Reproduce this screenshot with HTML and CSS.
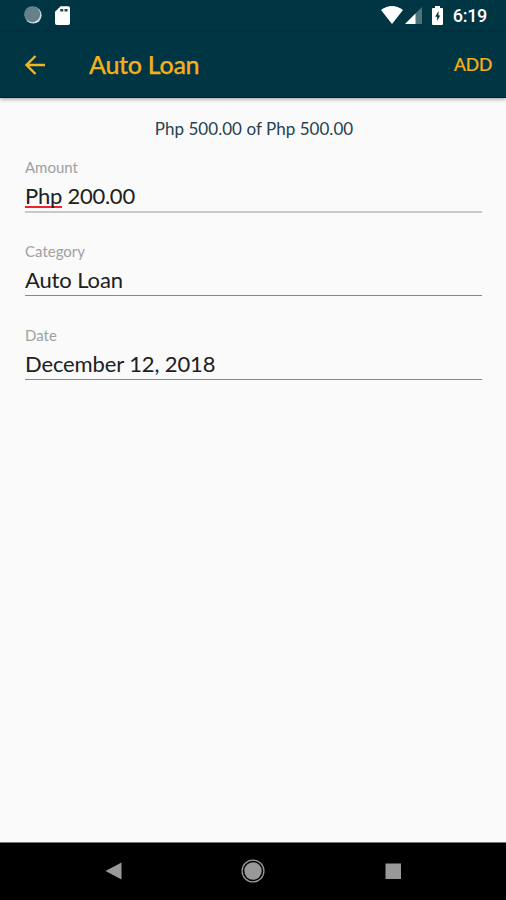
FILE: index.html
```html
<!DOCTYPE html>
<html lang="en">
<head>
<meta charset="utf-8">
<title>Auto Loan</title>
<link rel="stylesheet" href="styles.css">
</head>
<body>
<div class="screen">
  <div class="status">
    <svg class="sync" viewBox="0 0 18 18"><circle cx="9.2" cy="9.2" r="8.4" fill="#d3dddf"/><circle cx="8.2" cy="8.2" r="8" fill="#648088"/></svg>
    <svg class="sd" viewBox="0 0 16 20"><path d="M6 0h8a2 2 0 0 1 2 2v16a2 2 0 0 1-2 2H2a2 2 0 0 1-2-2V6z" fill="#fff"/><path d="M5.6 4.4h3.2M10.2 4.4h3.2" stroke="#1c4552" stroke-width="2.6"/></svg>
    <span class="grow"></span>
    <svg class="wifi" viewBox="0 0 22 18"><path d="M0 4Q11-4 22 4L11 18z" fill="#fff"/></svg>
    <svg class="cell" viewBox="0 0 17 17"><path d="M0 17L17 0v17z" fill="#4d727c"/><path d="M0 17L10.5 6.5V17z" fill="#fff"/></svg>
    <svg class="battery" viewBox="0 0 11 19"><path d="M3 2V0h5v2h2q1 0 1 1v15q0 1-1 1H1q-1 0-1-1V3q0-1 1-1z" fill="#fff"/><path d="M6.5 5L3.2 10.8h2V15l3-5.6H6.5z" fill="#003544"/></svg>
    <span class="clock">6:19</span>
  </div>
  <header class="bar">
    <svg class="back" viewBox="0 0 20 20"><path d="M20 10H2M10.5 1L1.5 10l9 9" fill="none" stroke="#f4b51e" stroke-width="2.4"/></svg>
    <h1>Auto Loan</h1>
    <span class="add">ADD</span>
  </header>
  <main>
    <p class="total">Php 500.00 of Php 500.00</p>
    <div class="field focused"><label>Amount</label><div class="value"><span class="misspelt">Php</span> 200.00</div></div>
    <div class="field"><label>Category</label><div class="value">Auto Loan</div></div>
    <div class="field"><label>Date</label><div class="value">December 12, 2018</div></div>
  </main>
  <nav>
    <svg viewBox="0 0 24 24"><path d="M4.5 12L20.5 3.5v17z" fill="#999"/></svg>
    <svg viewBox="0 0 24 24"><circle cx="12" cy="12" r="10.9" fill="none" stroke="#999" stroke-width="1.3"/><circle cx="12" cy="12" r="8.7" fill="#999"/></svg>
    <svg viewBox="0 0 24 24"><path d="M4.5 4.5h15.5v15.5H4.5z" fill="#999"/></svg>
  </nav>
</div>
</body>
</html>
```

FILE: styles.css
```css
* { box-sizing: border-box; }
body { margin: 0; font-family: Lato, sans-serif; background: #fafafa; }
.screen { width: 506px; height: 900px; display: flex; flex-direction: column; overflow: hidden; }
.status { height: 32px; background: #003544; display: flex; align-items: center; padding: 0 19px 2px 24px; flex: none; }
.sync { width: 18px; height: 18px; }
.sd { width: 15px; height: 19px; margin-left: 13px; }
.grow { flex: 1; }
.wifi { width: 22px; height: 18px; }
.cell { width: 17px; height: 17px; margin-left: 2px; }
.battery { width: 11px; height: 19px; margin-left: 10px; }
.clock { margin-left: 10px; font: 500 18px/20px Roboto, sans-serif; letter-spacing: -0.3px; color: #fff; padding-top: 2px; }
.bar { height: 66px; background: #003544; display: flex; align-items: center; padding: 0 14px 0 25px; color: #f4b01c; flex: none; border-bottom: 1px solid #001b30; box-shadow: 0 1px 4px #0006; }
.back { width: 20px; height: 20px; }
h1 { margin: 0 auto 0 44px; padding-bottom: 2px; font-size: 25px; line-height: 30px; font-weight: 500; letter-spacing: -0.3px; -webkit-text-stroke: 0.25px; }
.add { font-size: 17.5px; line-height: 22px; font-weight: 500; letter-spacing: -0.2px; padding-top: 1px; -webkit-text-stroke: 0.2px; }
main { flex: 1; padding: 21px 24px 0 25px; }
.total { margin: 0 0 19px; padding-left: 1px; text-align: center; font-size: 17px; line-height: 20px; letter-spacing: 0.04px; color: #24424f; }
.field { height: 54px; margin-bottom: 30px; border-bottom: 1px solid #888; }
.focused { border-bottom: 2px solid #c8c8c8; height: 55px; margin-bottom: 29px; }
label { display: block; font-size: 15px; line-height: 18px; color: #a0a0a0; }
.value { font-size: 22px; line-height: 28px; padding-top: 6px; letter-spacing: -0.13px; color: #202020; }
.focused .value { letter-spacing: -0.25px; }
.misspelt { text-decoration: underline 2px #ec2430; text-underline-offset: 2px; text-decoration-skip-ink: none; }
nav { height: 58px; background: #000; display: flex; align-items: center; justify-content: space-between; padding: 0 101px 2px; border-top: 1px solid #777; flex: none; }
nav svg { width: 24px; height: 24px; }
```
